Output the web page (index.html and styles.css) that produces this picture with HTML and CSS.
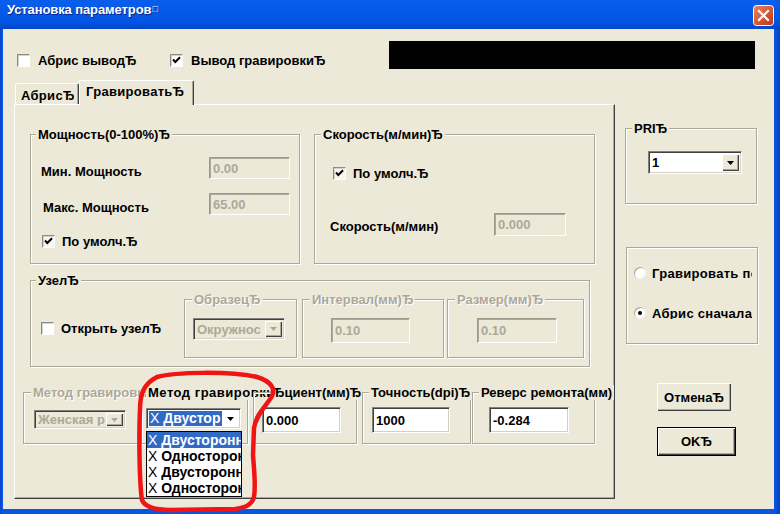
FILE: index.html
```html
<!DOCTYPE html>
<html>
<head>
<meta charset="utf-8">
<link rel="stylesheet" href="styles.css">
</head>
<body>
<div class="window">
  <div class="titlebar">
    <span class="title">Установка параметров<span class="sq">□</span></span>
    <span class="close"><svg width="21" height="21" viewBox="0 0 21 21"><defs><linearGradient id="cg" x1="0" y1="0" x2="1" y2="1"><stop offset="0" stop-color="#E8866A"/><stop offset="0.5" stop-color="#D85A36"/><stop offset="1" stop-color="#B8361A"/></linearGradient></defs><rect x="0.5" y="0.5" width="20" height="20" rx="3" fill="url(#cg)" stroke="#fff"/><path d="M6 6L15 15M15 6L6 15" stroke="#fff" stroke-width="2.2" stroke-linecap="square"/></svg></span>
  </div>
  <div class="client">
    <div class="toprow">
      <label class="chk w1"><span class="box"></span>Абрис выводЂ</label>
      <label class="chk w2"><span class="box"><svg width="11" height="11" viewBox="0 0 11 11"><path d="M2 4.5L4.3 7L9 2.3" stroke="#000" stroke-width="2" fill="none"/></svg></span>Вывод гравировкиЂ</label>
      <div class="blackbox"></div>
    </div>
    <div class="main">
      <div class="tabctl">
        <div class="tabs">
          <div class="tab t1">АбрисЂ</div>
          <div class="tab t2">ГравироватьЂ</div>
        </div>
        <div class="panel">
          <div class="rowA">
            <div class="group gpow">
              <span class="legend lg-pow">Мощность(0-100%)Ђ</span>
              <div class="frow r1"><span class="lbl l1">Мин. Мощность</span><span class="edit dis e81">0.00</span></div>
              <div class="frow r2"><span class="lbl l2">Макс. Мощность</span><span class="edit dis e81">65.00</span></div>
              <label class="chk c3"><span class="box dbox"><svg width="11" height="11" viewBox="0 0 11 11"><path d="M2 4.5L4.3 7L9 2.3" stroke="#000" stroke-width="2" fill="none"/></svg></span>По умолч.Ђ</label>
            </div>
            <div class="group gspd">
              <span class="legend lg-spd">Скорость(м/мин)Ђ</span>
              <label class="chk c1"><span class="box dbox"><svg width="11" height="11" viewBox="0 0 11 11"><path d="M2 4.5L4.3 7L9 2.3" stroke="#000" stroke-width="2" fill="none"/></svg></span>По умолч.Ђ</label>
              <div class="frow r2"><span class="lbl l3">Скорость(м/мин)</span><span class="edit dis e72">0.000</span></div>
            </div>
          </div>
          <div class="rowB">
            <div class="group gnode">
              <span class="legend lg-node">УзелЂ</span>
              <label class="chk c1"><span class="box"></span>Открыть узелЂ</label>
              <div class="group gsamp">
                <span class="legend dtext lg-7">ОбразецЂ</span>
                <div class="combo dis cb-samp"><span class="cval">Окружнос</span><span class="arrow"><svg width="7" height="4" viewBox="0 0 7 4"><path d="M0 0H7L3.5 4Z" fill="#ACA899"/></svg></span></div>
              </div>
              <div class="group gint">
                <span class="legend dtext lg-7">Интервал(мм)Ђ</span>
                <span class="edit dis e-int">0.10</span>
              </div>
              <div class="group gsize">
                <span class="legend dtext lg-7">Размер(мм)Ђ</span>
                <span class="edit dis e-size">0.10</span>
              </div>
            </div>
          </div>
          <div class="rowC">
            <div class="group c-g1">
              <span class="legend dtext lg-c1">Метод гравировки</span>
              <div class="combo dis cb-1"><span class="cval">Женская р</span><span class="arrow"><svg width="7" height="4" viewBox="0 0 7 4"><path d="M0 0H7L3.5 4Z" fill="#ACA899"/></svg></span></div>
            </div>
            <div class="group c-g2">
              <span class="legend lg-c2">Метод гравировкиЂ</span>
              <div class="combo cb-2"><span class="cval selv"><span class="x">X</span>&nbsp;Двустор</span><span class="arrow flat"><svg width="7" height="4" viewBox="0 0 7 4"><path d="M0 0H7L3.5 4Z" fill="#000"/></svg></span>
                <div class="droplist">
                  <div class="item hi"><span class="x">X</span> Двусторонний</div>
                  <div class="item"><span class="x">X</span> Односторонний</div>
                  <div class="item"><span class="x">X</span> Двусторонний</div>
                  <div class="item"><span class="x">X</span> Односторонний</div>
                </div>
              </div>
            </div>
            <div class="group c-g3">
              <span class="legend lg-c3">Ђциент(мм)Ђ</span>
              <span class="edit e-c3">0.000</span>
            </div>
            <div class="group c-g4">
              <span class="legend lg-c4">Точность(dpi)Ђ</span>
              <span class="edit e-c4">1000</span>
            </div>
            <div class="group c-g5">
              <span class="legend lg-c5">Реверс ремонта(мм)</span>
              <span class="edit e-c5">-0.284</span>
            </div>
          </div>
        </div>
      </div>
      <div class="rcol">
        <div class="group gpri">
          <span class="legend lg-pri">PRIЂ</span>
          <div class="combo cb-pri"><span class="cval">1</span><span class="arrow"><svg width="7" height="4" viewBox="0 0 7 4"><path d="M0 0H7L3.5 4Z" fill="#000"/></svg></span></div>
        </div>
        <div class="group grad">
          <div class="rin">
            <div class="radio rd1"><span class="rbtn"></span>Гравировать по порядку</div>
            <div class="radio rd2"><span class="rbtn on"></span>Абрис сначалаЂ</div>
          </div>
        </div>
        <div class="btn b-cancel">ОтменаЂ</div>
        <div class="btn b-ok">OKЂ</div>
      </div>
    </div>
  </div>
  <svg class="redmark" width="780" height="514" viewBox="0 0 780 514"><path d="M157 377C175 372 230 371 257 377C270 381 276 388 272 396C267 405 256 414 254 428L253 455C254 470 256 485 254 497C252 505 245 508 235 509L170 510C155 510 145 507 142 500C139 480 139 430 140 410C140 395 143 384 157 377Z" fill="none" stroke="#F01414" stroke-width="4.5" stroke-linejoin="round"/></svg>
</div>
</body>
</html>
```

FILE: styles.css
```css
* { box-sizing: border-box; }
html, body { margin: 0; padding: 0; }
body {
  width: 780px; height: 514px; overflow: hidden;
  font-family: "Liberation Sans", Arial, sans-serif;
  font-weight: bold; font-size: 13px; color: #000;
}
.window {
  position: relative; width: 780px; height: 514px;
  background: linear-gradient(90deg, #0840C8 0px, #0A56E0 2px, #0A56E0 774px, #0840C8 780px);
  display: flex; flex-direction: column;
}
.titlebar {
  height: 29px; flex: none; display: flex; align-items: flex-start;
  justify-content: space-between; padding: 0 6px 0 7px;
  background: linear-gradient(#0A5EEC 0%, #0659E8 40%, #0253E0 80%, #0046C8 100%);
}
.title { color: #fff; font-size: 13px; line-height: 15px; margin-top: 2px; text-shadow: 1px 1px 0 #0A248C; letter-spacing: -0.1px; }
.sq { font-size: 9px; font-weight: normal; margin-left: 1px; vertical-align: 2px; }
.close { margin-top: 5px; width: 21px; height: 21px; display: block; }
.close svg { display: block; }
.client {
  flex: 1; margin: 0 6px 5px 3px; background: #ECE9D8;
  display: flex; flex-direction: column;
}
.toprow { display: flex; height: 28px; margin-top: 12px; padding-left: 14px; flex: none; }
.chk { display: flex; align-items: center; gap: 7px; height: 13px; line-height: 15px; white-space: nowrap; }
.toprow .chk { margin-top: 13px; gap: 8px; }
.w1 { width: 153px; }
.w2 { width: 219px; }
.blackbox { width: 366px; height: 28px; background: #000; }
.box {
  width: 13px; height: 13px; flex: none; background: #fff;
  border-top: 1px solid #8E8C80; border-left: 1px solid #8E8C80;
  border-right: 1px solid #fff; border-bottom: 1px solid #fff;
  box-shadow: inset 1px 1px 0 #D6D3C6;
  display: flex; align-items: center; justify-content: center;
}
.box svg { display: block; }
.dbox { background: #F6F5F0; }

.main { display: flex; margin-top: 11px; padding-left: 11px; flex: none; }
.tabctl { width: 601px; display: flex; flex-direction: column; }
.tabs { display: flex; align-items: flex-end; height: 25px; padding-left: 1px; }
.tab {
  line-height: 15px; white-space: nowrap; background: #ECE9D8; letter-spacing: 0.3px;
  border-top: 1px solid #fff; border-left: 1px solid #fff; border-right: 1px solid #404040;
  border-radius: 2px 2px 0 0; box-shadow: inset -1px 0 0 #ACA899;
}
.t1 { width: 64px; height: 21px; margin-bottom: 1px; padding: 4px 0 0 5px; }
.t2 { width: 115px; height: 25px; padding: 3px 0 0 6px; position: relative; z-index: 2; }
.panel {
  height: 395px; margin-top: -1px; background: #ECE9D8;
  border-top: 1px solid #fff; border-left: 1px solid #fff;
  border-right: 1px solid #404040; border-bottom: 1px solid #404040;
  box-shadow: inset -1px -1px 0 #ACA899;
  display: flex; flex-direction: column;
}

.group {
  position: relative; flex: none;
  border: 1px solid #ACA899;
  box-shadow: inset 1px 1px 0 #fff, 1px 1px 0 #fff;
}
.legend {
  position: absolute; top: -8px; left: 6px; padding: 0 2px;
  background: #ECE9D8; line-height: 15px; white-space: nowrap;
}
.dtext { color: #ACA899; text-shadow: 1px 1px 0 #fff; }
.lbl { line-height: 15px; margin-top: 7px; white-space: nowrap; }
.frow { display: flex; align-items: flex-start; }

.edit {
  display: flex; align-items: center; padding: 0 3px; background: #fff; white-space: nowrap; overflow: hidden;
  border-top: 1px solid #808080; border-left: 1px solid #808080;
  border-right: 1px solid #fff; border-bottom: 1px solid #fff;
  box-shadow: inset 1px 1px 0 #404040, inset -1px -1px 0 #D4D0C8;
  line-height: 15px;
}
.edit.dis { background: #ECE9D8; color: #ACA899; box-shadow: inset 1px 1px 0 #ACA899; border-top-color: #9D9A8A; border-left-color: #9D9A8A; }

.combo {
  position: relative; display: flex; align-items: stretch; padding: 2px; background: #fff;
  border-top: 1px solid #808080; border-left: 1px solid #808080;
  border-right: 1px solid #fff; border-bottom: 1px solid #fff;
  box-shadow: inset 1px 1px 0 #404040, inset -1px -1px 0 #D4D0C8;
}
.combo.dis { background: #ECE9D8; color: #ACA899; }
.cval { display: flex; align-items: center; white-space: nowrap; overflow: hidden; line-height: 15px; padding-left: 1px; flex: 1; }
.arrow {
  width: 17px; flex: none; background: #ECE9D8; display: flex; align-items: center; justify-content: center;
  box-shadow: inset 1px 1px 0 #fff, inset -1px -1px 0 #404040, inset -2px -2px 0 #ACA899;
}
.arrow svg { display: block; }
.arrow.flat { box-shadow: none; background: #fff; }
.x { font-weight: normal; font-size: 14px; }

/* row A */
.rowA { display: flex; margin-top: 29px; padding-left: 15px; }
.gpow { width: 270px; height: 130px; }
.gspd { width: 281px; height: 130px; margin-left: 14px; }
.lg-pow { left: 5px; }
.lg-spd { left: 6px; }
.gpow .r1 { margin-top: 22px; }
.gpow .l1 { margin-left: 10px; width: 168px; }
.gpow .r2 { margin-top: 14px; }
.gpow .l2 { margin-left: 12px; width: 166px; }
.e81 { width: 81px; height: 22px; }
.gpow .c3 { margin: 20px 0 0 11px; }
.gspd .c1 { margin: 32px 0 0 18px; }
.gspd .r2 { margin-top: 33px; }
.l3 { margin-left: 15px; width: 164px; margin-top: 6px; }
.e72 { width: 72px; height: 23px; }

/* row B */
.rowB { display: flex; margin-top: 16px; padding-left: 15px; }
.gnode { width: 560px; height: 87px; display: flex; align-items: flex-start; padding-top: 18px; }
.lg-node { left: 5px; }
.gnode .c1 { margin: 23px 0 0 10px; width: 143px; }
.gsamp { width: 113px; height: 59px; }
.gint { width: 142px; height: 59px; margin-left: 5px; }
.gsize { width: 137px; height: 59px; margin-left: 3px; }
.lg-7 { left: 7px; }
.cb-samp { margin: 18px 0 0 8px; width: 92px; height: 22px; }
.e-int { margin: 18px 0 0 28px; width: 79px; height: 25px; }
.e-size { margin: 18px 0 0 29px; width: 80px; height: 25px; }

/* row C */
.rowC { display: flex; margin-top: 25px; padding-left: 8px; }
.c-g1 { width: 118px; height: 52px; }
.c-g2 { width: 107px; height: 52px; }
.c-g3 { width: 104px; height: 52px; margin-left: 5px; }
.c-g4 { width: 109px; height: 52px; margin-left: 5px; }
.c-g5 { width: 123px; height: 52px; margin-left: 1px; }
.lg-c1 { left: 7px; }
.lg-c2 { left: 4px; letter-spacing: 0.5px; }
.lg-c3 { left: 17px; }
.lg-c4 { left: 6px; }
.lg-c5 { left: 6px; }
.cb-1 { margin: 17px 0 0 10px; width: 92px; height: 19px; }
.cb-2 { margin: 15px 0 0 4px; width: 95px; height: 21px; z-index: 3; }
.selv { flex: none; width: 73px; background: #316AC5; color: #fff; padding-left: 1px; font-size: 14px; }
.e-c3 { margin: 14px 0 0 8px; width: 79px; height: 26px; }
.e-c4 { margin: 14px 0 0 9px; width: 78px; height: 26px; }
.e-c5 { margin: 14px 0 0 16px; width: 80px; height: 26px; }
.droplist {
  position: absolute; left: -1px; top: 22px; width: 96px; height: 66px;
  background: #fff; border: 1px solid #000; overflow: hidden; padding-top: 0;
}
.item { height: 16px; line-height: 16px; white-space: nowrap; font-size: 14px; padding-left: 1px; }
.item.hi { background: #316AC5; color: #fff; }

/* right column */
.rcol { margin-left: 10px; display: flex; flex-direction: column; width: 134px; }
.gpri { margin-top: 48px; width: 132px; height: 76px; }
.lg-pri { left: 6px; }
.cb-pri { margin: 22px 0 0 22px; width: 94px; height: 23px; }
.grad { margin-top: 43px; margin-left: 1px; width: 132px; height: 97px; }
.rin { width: 125px; overflow: hidden; padding-left: 7px; letter-spacing: 0.3px; }
.radio { display: flex; align-items: center; gap: 6px; height: 12px; line-height: 15px; white-space: nowrap; }
.rd1 { margin-top: 19px; }
.rd2 { margin-top: 28px; }
.rbtn {
  width: 12px; height: 12px; flex: none; border-radius: 50%; background: #fff;
  box-shadow: inset 1px 1px 0 #ACA899, inset -1px -1px 0 #F4F3EE;
  display: flex; align-items: center; justify-content: center;
}
.rbtn.on::after { content: ""; width: 4px; height: 4px; border-radius: 50%; background: #000; }
.btn {
  display: flex; align-items: center; justify-content: center; background: #ECE9D8; margin-left: 32px;
  box-shadow: inset 1px 1px 0 #fff, inset -1px -1px 0 #404040, inset -2px -2px 0 #ACA899;
  line-height: 15px; white-space: nowrap;
}
.b-cancel { margin-top: 39px; width: 74px; height: 28px; }
.b-ok { margin-top: 16px; width: 79px; height: 29px; border: 1px solid #000; }

.redmark { position: absolute; left: 0; top: 0; pointer-events: none; z-index: 10; }
```
